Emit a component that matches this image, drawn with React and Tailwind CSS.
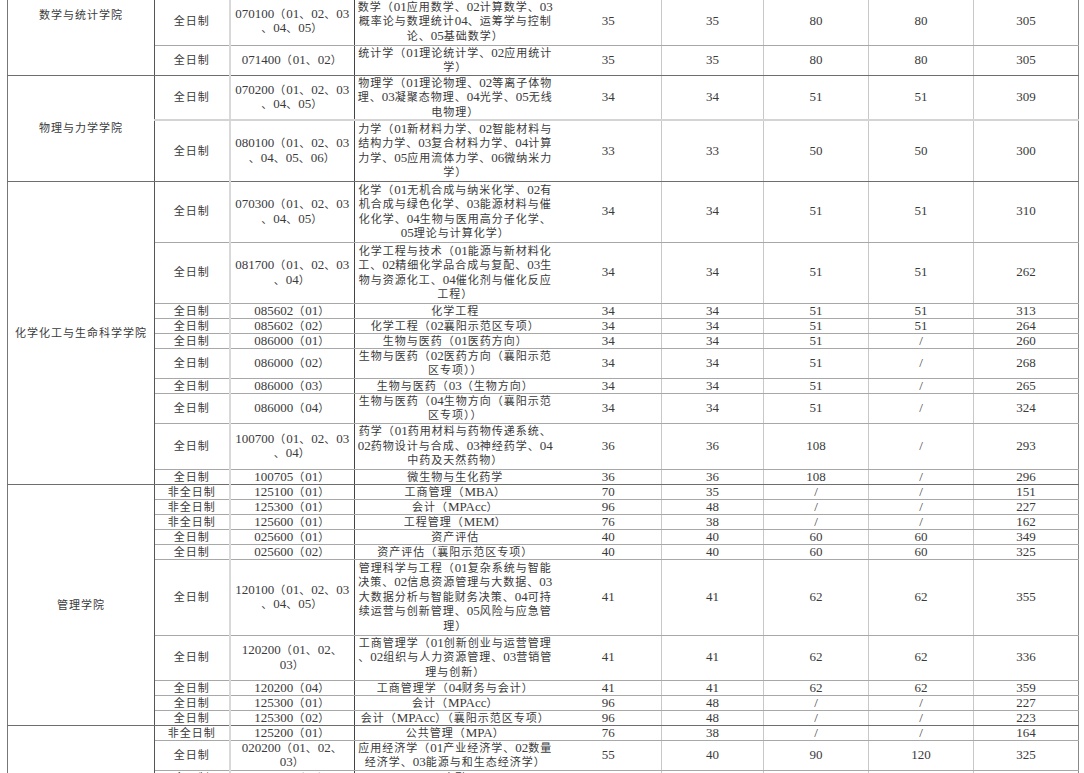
// App.jsx - 招生专业复试分数线表（截取部分）
import React from 'react';

// 字母数字段用 Times 宽度的字体并放大，中文段加字距
const Txt = ({ s }) =>
  s
    .split(/([0-9A-Za-z./]+)/)
    .filter((p) => p !== '')
    .map((p, i) =>
      /^[0-9A-Za-z./]+$/.test(p) ? (
        <span key={i} className="text-[13px] tracking-normal leading-[10px]">
          {p}
        </span>
      ) : (
        <span key={i}>{p}</span>
      )
    );

const Lines = ({ lines }) => (
  <>
    {lines.map((l, i) => (
      <div key={i} className="whitespace-nowrap">
        <Txt s={l} />
      </div>
    ))}
  </>
);

const groups = [
  {
    name: '数学与统计学院',
    top: true,
    rows: [
      {
        h: 'h-[47px]',
        type: '全日制',
        code: ['070100（01、02、03', '、04、05）'],
        spec: ['数学（01应用数学、02计算数学、03', '概率论与数理统计04、运筹学与控制', '论、05基础数学）'],
        n: ['35', '35', '80', '80', '305'],
      },
      {
        h: 'h-[29px]',
        type: '全日制',
        code: ['071400（01、02）'],
        spec: ['统计学（01理论统计学、02应用统计', '学）'],
        n: ['35', '35', '80', '80', '305'],
      },
    ],
  },
  {
    name: '物理与力学学院',
    rows: [
      {
        h: 'h-[45px]',
        thick: true,
        type: '全日制',
        code: ['070200（01、02、03', '、04、05）'],
        spec: ['物理学（01理论物理、02等离子体物', '理、03凝聚态物理、04光学、05无线', '电物理）'],
        n: ['34', '34', '51', '51', '309'],
      },
      {
        h: 'h-[61px]',
        type: '全日制',
        code: ['080100（01、02、03', '、04、05、06）'],
        spec: ['力学（01新材料力学、02智能材料与', '结构力学、03复合材料力学、04计算', '力学、05应用流体力学、06微纳米力', '学）'],
        n: ['33', '33', '50', '50', '300'],
      },
    ],
  },
  {
    name: '化学化工与生命科学学院',
    rows: [
      {
        h: 'h-[61px]',
        type: '全日制',
        code: ['070300（01、02、03', '、04、05）'],
        spec: ['化学（01无机合成与纳米化学、02有', '机合成与绿色化学、03能源材料与催', '化化学、04生物与医用高分子化学、', '05理论与计算化学）'],
        n: ['34', '34', '51', '51', '310'],
      },
      {
        h: 'h-[61px]',
        type: '全日制',
        code: ['081700（01、02、03', '、04）'],
        spec: ['化学工程与技术（01能源与新材料化', '工、02精细化学品合成与复配、03生', '物与资源化工、04催化剂与催化反应', '工程）'],
        n: ['34', '34', '51', '51', '262'],
      },
      { h: 'h-[15px]', type: '全日制', code: ['085602（01）'], spec: ['化学工程'], n: ['34', '34', '51', '51', '313'] },
      { h: 'h-[15px]', type: '全日制', code: ['085602（02）'], spec: ['化学工程（02襄阳示范区专项）'], n: ['34', '34', '51', '51', '264'] },
      { h: 'h-[15px]', type: '全日制', code: ['086000（01）'], spec: ['生物与医药（01医药方向）'], n: ['34', '34', '51', '/', '260'] },
      {
        h: 'h-[30px]',
        type: '全日制',
        code: ['086000（02）'],
        spec: ['生物与医药（02医药方向（襄阳示范', '区专项））'],
        n: ['34', '34', '51', '/', '268'],
      },
      { h: 'h-[15px]', type: '全日制', code: ['086000（03）'], spec: ['生物与医药（03（生物方向）'], n: ['34', '34', '51', '/', '265'] },
      {
        h: 'h-[30px]',
        type: '全日制',
        code: ['086000（04）'],
        spec: ['生物与医药（04生物方向（襄阳示范', '区专项））'],
        n: ['34', '34', '51', '/', '324'],
      },
      {
        h: 'h-[46px]',
        type: '全日制',
        code: ['100700（01、02、03', '、04）'],
        spec: ['药学（01药用材料与药物传递系统、', '02药物设计与合成、03神经药学、04', '中药及天然药物）'],
        n: ['36', '36', '108', '/', '293'],
      },
      { h: 'h-[15px]', type: '全日制', code: ['100705（01）'], spec: ['微生物与生化药学'], n: ['36', '36', '108', '/', '296'] },
    ],
  },
  {
    name: '管理学院',
    rows: [
      { h: 'h-[15px]', type: '非全日制', code: ['125100（01）'], spec: ['工商管理（MBA）'], n: ['70', '35', '/', '/', '151'] },
      { h: 'h-[15px]', type: '非全日制', code: ['125300（01）'], spec: ['会计（MPAcc）'], n: ['96', '48', '/', '/', '227'] },
      { h: 'h-[15px]', type: '非全日制', code: ['125600（01）'], spec: ['工程管理（MEM）'], n: ['76', '38', '/', '/', '162'] },
      { h: 'h-[15px]', type: '全日制', code: ['025600（01）'], spec: ['资产评估'], n: ['40', '40', '60', '60', '349'] },
      { h: 'h-[15px]', type: '全日制', code: ['025600（02）'], spec: ['资产评估（襄阳示范区专项）'], n: ['40', '40', '60', '60', '325'] },
      {
        h: 'h-[76px]',
        type: '全日制',
        code: ['120100（01、02、03', '、04、05）'],
        spec: ['管理科学与工程（01复杂系统与智能', '决策、02信息资源管理与大数据、03', '大数据分析与智能财务决策、04可持', '续运营与创新管理、05风险与应急管', '理）'],
        n: ['41', '41', '62', '62', '355'],
      },
      {
        h: 'h-[45px]',
        type: '全日制',
        code: ['120200（01、02、', '03）'],
        spec: ['工商管理学（01创新创业与运营管理', '、02组织与人力资源管理、03营销管', '理与创新）'],
        n: ['41', '41', '62', '62', '336'],
      },
      { h: 'h-[15px]', type: '全日制', code: ['120200（04）'], spec: ['工商管理学（04财务与会计）'], n: ['41', '41', '62', '62', '359'] },
      { h: 'h-[15px]', type: '全日制', code: ['125300（01）'], spec: ['会计（MPAcc）'], n: ['96', '48', '/', '/', '227'] },
      { h: 'h-[15px]', type: '全日制', code: ['125300（02）'], spec: ['会计（MPAcc）（襄阳示范区专项）'], n: ['96', '48', '/', '/', '223'] },
    ],
  },
  {
    name: '',
    rows: [
      { h: 'h-[15px]', type: '非全日制', code: ['125200（01）'], spec: ['公共管理（MPA）'], n: ['76', '38', '/', '/', '164'] },
      {
        h: 'h-[30px]',
        type: '全日制',
        code: ['020200（01、02、', '03）'],
        spec: ['应用经济学（01产业经济学、02数量', '经济学、03能源与和生态经济学）'],
        n: ['55', '40', '90', '120', '325'],
      },
      { h: 'h-[15px]', type: '全日制', code: ['025100（01）'], spec: ['金融'], n: ['55', '40', '90', '120', '325'] },
    ],
  },
];

const cell = 'p-0 text-center align-middle';

const App = () => {
  return (
    <div className="w-[1084px] h-[773px] overflow-hidden bg-white pl-[7px]">
      <table className="table-fixed border-collapse mt-[-2px] w-[1071px] font-['Liberation_Serif','Noto_Sans_CJK_SC',serif] text-[11px] tracking-[1px] leading-[14.5px] text-[#3a3a3a]">
        <colgroup>
          <col className="w-[147px]" />
          <col className="w-[75px]" />
          <col className="w-[125px]" />
          <col className="w-[201px]" />
          <col className="w-[106px]" />
          <col className="w-[102px]" />
          <col className="w-[105px]" />
          <col className="w-[105px]" />
          <col className="w-[105px]" />
        </colgroup>
        <tbody>
          {groups.map((g, gi) =>
            g.rows.map((r, ri) => {
              const last = ri === g.rows.length - 1;
              const single = r.spec.length === 1 && r.code.length === 1;
              const hb = last
                ? 'border-b border-b-[#6e6e6e]'
                : r.thick
                ? 'border-b-2 border-b-[#d4d4d4]'
                : 'border-b border-b-[#a8a8a8]';
              return (
                <tr key={`${gi}-${ri}`} className={`${r.h} ${single ? 'leading-[14px]' : ''}`}>
                  {ri === 0 && (
                    <td
                      rowSpan={g.rows.length}
                      className={`p-0 text-center leading-[14px] border-l border-l-[#777] border-r border-r-[#555] border-b border-b-[#6e6e6e] ${
                        g.top ? 'align-top pt-[10px]' : 'align-middle'
                      }`}
                    >
                      <Txt s={g.name} />
                    </td>
                  )}
                  <td className={`${cell} ${hb} border-r-2 border-r-[#d9d9d9]`}>
                    <Txt s={r.type} />
                  </td>
                  <td className={`${cell} ${hb} border-r border-r-[#444]`}>
                    <Lines lines={r.code} />
                  </td>
                  <td className={`${cell} ${hb}`}>
                    <Lines lines={r.spec} />
                  </td>
                  {r.n.map((v, i) => (
                    <td
                      key={i}
                      className={`${cell} ${hb} border-r ${
                        i === 4 ? 'border-r-[#888]' : 'border-r-[#c8c8c8]'
                      }`}
                    >
                      <span className="text-[13px] tracking-normal leading-[10px]">{v}</span>
                    </td>
                  ))}
                </tr>
              );
            })
          )}
        </tbody>
      </table>
    </div>
  );
};

export default App;
